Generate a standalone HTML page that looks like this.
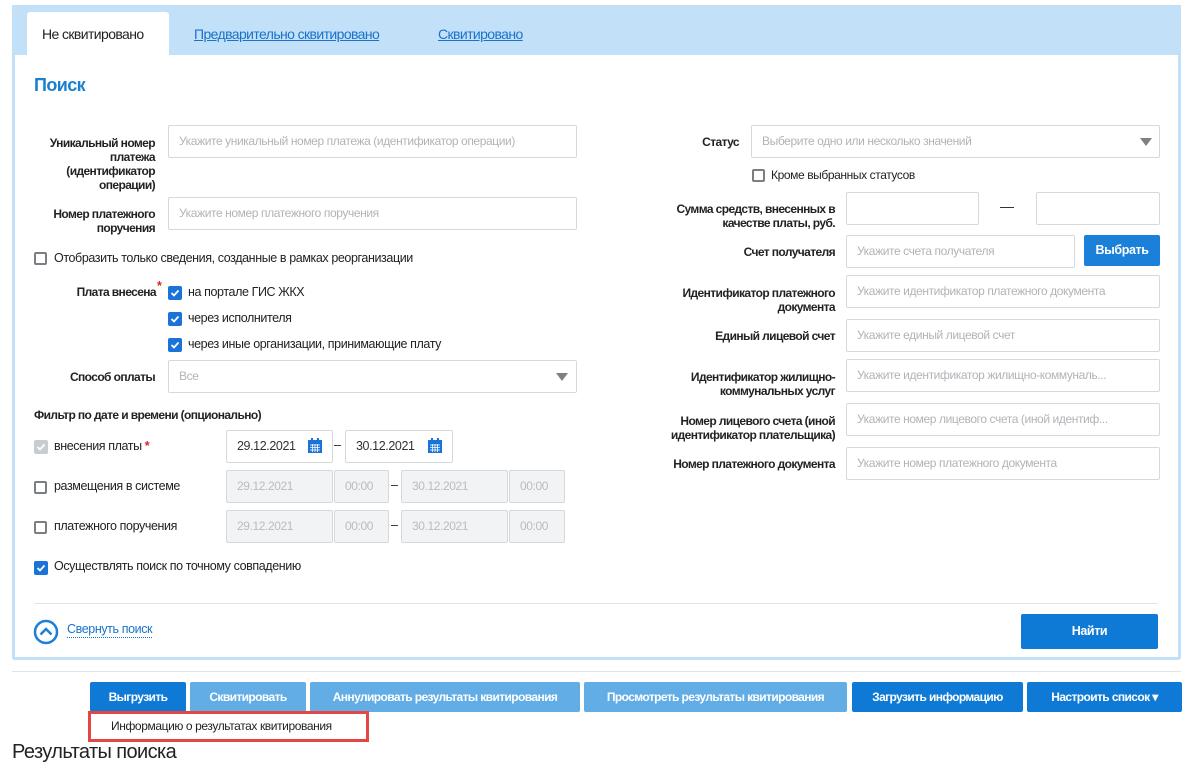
<!DOCTYPE html>
<html><head><meta charset="utf-8"><style>
*{box-sizing:border-box;margin:0;padding:0}
body{width:1193px;height:750px;overflow:hidden;background:#fff;position:relative;font-family:"Liberation Sans Narrow","Liberation Sans",sans-serif;font-size:12.5px;letter-spacing:-0.4px;color:#222}
.a{position:absolute}
.lb{position:absolute;font-weight:bold;text-align:right;line-height:14px;color:#222;font-size:12px;letter-spacing:-0.6px}
.in{position:absolute;border:1px solid #d6d9dc;border-radius:2px;background:#fff;height:33px;padding-left:10px;line-height:31px;font-size:12px;color:#b0b4b8;white-space:nowrap;overflow:hidden}
.dis{background:#f1f3f5;color:#b9bdc1}
.cb{position:absolute;width:13px;height:13px;border:2px solid #7b7f84;border-radius:2px;background:#fff}
.ck{position:absolute;width:14px;height:14px;border-radius:2px;background:#1a73d9}
.ck svg,.gk svg{position:absolute;left:2px;top:2px}
.gk{position:absolute;width:14px;height:14px;border-radius:2px;background:#c9cccf}
.t{position:absolute;white-space:nowrap;color:#222}
.btn{position:absolute;top:682px;height:30px;color:#fff;font-weight:bold;text-align:center;line-height:30px;font-size:12px;letter-spacing:-0.6px;border-radius:2px;white-space:nowrap;overflow:hidden}
.b1{background:#0f7ad6}.b2{background:#62ade5}
.tri{position:absolute;width:0;height:0;border-left:6px solid transparent;border-right:6px solid transparent;border-top:8px solid #7d8185}
</style></head><body>
<div class="a" style="left:12px;top:5px;width:1169px;height:50px;background:#c2e0f7"></div>
<div class="a" style="left:12px;top:55px;width:1169px;height:605px;border:3px solid #c2e0f7;border-top:none;border-radius:0 0 3px 3px"></div>
<div class="a" style="left:27px;top:12px;width:142px;height:43px;background:#fff;border-radius:3px 3px 0 0"></div>
<div class="t" style="left:42px;top:26px;font-size:14px;letter-spacing:-0.6px">Не сквитировано</div>
<div class="t" style="left:194px;top:26px;font-size:14px;letter-spacing:-0.6px;color:#1a73c9;text-decoration:underline">Предварительно сквитировано</div>
<div class="t" style="left:438px;top:26px;font-size:14px;letter-spacing:-0.6px;color:#1a73c9;text-decoration:underline">Сквитировано</div>
<div class="t" style="left:34px;top:75px;font-size:18px;font-weight:bold;color:#1a80cf;letter-spacing:-0.6px">Поиск</div>

<div class="lb" style="left:20px;top:136px;width:135px">Уникальный номер платежа (идентификатор операции)</div>
<div class="in" style="left:168px;top:125px;width:409px">Укажите уникальный номер платежа (идентификатор операции)</div>
<div class="lb" style="left:20px;top:207px;width:135px">Номер платежного поручения</div>
<div class="in" style="left:168px;top:197px;width:409px">Укажите номер платежного поручения</div>
<div class="cb" style="left:34px;top:252px"></div>
<div class="t" style="left:54px;top:251px">Отобразить только сведения, созданные в рамках реорганизации</div>
<div class="lb" style="left:20px;top:285px;width:136px">Плата внесена</div>
<div class="t" style="left:157px;top:279px;color:#d22;font-weight:bold">*</div>
<div class="ck" style="left:168px;top:286px"><svg width="10" height="10"><path d="M1.5 5l2.5 2.5 4.5-5" stroke="#fff" stroke-width="1.8" fill="none"/></svg></div>
<div class="t" style="left:188px;top:285px">на портале ГИС ЖКХ</div>
<div class="ck" style="left:168px;top:312px"><svg width="10" height="10"><path d="M1.5 5l2.5 2.5 4.5-5" stroke="#fff" stroke-width="1.8" fill="none"/></svg></div>
<div class="t" style="left:188px;top:311px">через исполнителя</div>
<div class="ck" style="left:168px;top:338px"><svg width="10" height="10"><path d="M1.5 5l2.5 2.5 4.5-5" stroke="#fff" stroke-width="1.8" fill="none"/></svg></div>
<div class="t" style="left:188px;top:337px">через иные организации, принимающие плату</div>
<div class="lb" style="left:20px;top:370px;width:135px">Способ оплаты</div>
<div class="in" style="left:168px;top:360px;width:409px">Все</div>
<div class="tri" style="left:556px;top:373px"></div>

<div class="t" style="left:34px;top:408px;font-weight:bold;font-size:12px;letter-spacing:-0.6px">Фильтр по дате и времени (опционально)</div>
<div class="gk" style="left:34px;top:440px"><svg width="10" height="10"><path d="M1.5 5l2.5 2.5 4.5-5" stroke="#fff" stroke-width="1.8" fill="none"/></svg></div>
<div class="t" style="left:54px;top:439px">внесения платы <span style="color:#d22;font-weight:bold">*</span></div>
<div class="in" style="left:226px;top:430px;width:107px;color:#333;font-size:12.5px">29.12.2021</div>
<div class="in" style="left:345px;top:430px;width:108px;color:#333;font-size:12.5px">30.12.2021</div>
<svg class="a" style="left:307px;top:438px" width="16" height="16"><rect x="1" y="2" width="14" height="13" fill="#1a73d9"/><rect x="4" y="0" width="2" height="4" fill="#1a73d9"/><rect x="10" y="0" width="2" height="4" fill="#1a73d9"/><path d="M3 7h10M3 9.5h10M3 12h10M5.5 6v8M8 6v8M10.5 6v8" stroke="#fff" stroke-width=".8"/></svg>
<svg class="a" style="left:427px;top:438px" width="16" height="16"><rect x="1" y="2" width="14" height="13" fill="#1a73d9"/><rect x="4" y="0" width="2" height="4" fill="#1a73d9"/><rect x="10" y="0" width="2" height="4" fill="#1a73d9"/><path d="M3 7h10M3 9.5h10M3 12h10M5.5 6v8M8 6v8M10.5 6v8" stroke="#fff" stroke-width=".8"/></svg>
<div class="t" style="left:334px;top:438px">–</div>

<div class="cb" style="left:34px;top:481px"></div>
<div class="t" style="left:54px;top:479px">размещения в системе</div>
<div class="in dis" style="left:226px;top:470px;width:107px">29.12.2021</div>
<div class="in dis" style="left:334px;top:470px;width:55px">00:00</div>
<div class="t" style="left:391px;top:478px">–</div>
<div class="in dis" style="left:401px;top:470px;width:107px">30.12.2021</div>
<div class="in dis" style="left:509px;top:470px;width:56px">00:00</div>
<div class="cb" style="left:34px;top:521px"></div>
<div class="t" style="left:54px;top:519px">платежного поручения</div>
<div class="in dis" style="left:226px;top:510px;width:107px">29.12.2021</div>
<div class="in dis" style="left:334px;top:510px;width:55px">00:00</div>
<div class="t" style="left:391px;top:518px">–</div>
<div class="in dis" style="left:401px;top:510px;width:107px">30.12.2021</div>
<div class="in dis" style="left:509px;top:510px;width:56px">00:00</div>
<div class="ck" style="left:34px;top:561px"><svg width="10" height="10"><path d="M1.5 5l2.5 2.5 4.5-5" stroke="#fff" stroke-width="1.8" fill="none"/></svg></div>
<div class="t" style="left:54px;top:559px">Осуществлять поиск по точному совпадению</div>

<div class="lb" style="left:640px;top:135px;width:99px">Статус</div>
<div class="in" style="left:751px;top:125px;width:409px">Выберите одно или несколько значений</div>
<div class="tri" style="left:1140px;top:138px"></div>
<div class="cb" style="left:752px;top:169px"></div>
<div class="t" style="left:771px;top:168px;font-size:12px">Кроме выбранных статусов</div>
<div class="lb" style="left:640px;top:202px;width:195px">Сумма средств, внесенных в качестве платы, руб.</div>
<div class="in" style="left:846px;top:192px;width:133px"></div>
<div class="a" style="left:1000px;top:207px;width:14px;height:1px;background:#333"></div>
<div class="in" style="left:1036px;top:192px;width:124px"></div>
<div class="lb" style="left:640px;top:245px;width:195px">Счет получателя</div>
<div class="in" style="left:846px;top:235px;width:229px">Укажите счета получателя</div>
<div class="a" style="left:1084px;top:235px;width:76px;height:31px;background:#1a80d9;color:#fff;font-weight:bold;text-align:center;line-height:31px;border-radius:2px;font-size:12.5px">Выбрать</div>
<div class="lb" style="left:640px;top:286px;width:195px">Идентификатор платежного документа</div>
<div class="in" style="left:846px;top:275px;width:314px">Укажите идентификатор платежного документа</div>
<div class="lb" style="left:640px;top:329px;width:195px">Единый лицевой счет</div>
<div class="in" style="left:846px;top:319px;width:314px">Укажите единый лицевой счет</div>
<div class="lb" style="left:640px;top:370px;width:195px">Идентификатор жилищно-коммунальных услуг</div>
<div class="in" style="left:846px;top:359px;width:314px">Укажите идентификатор жилищно-коммуналь...</div>
<div class="lb" style="left:640px;top:414px;width:195px">Номер лицевого счета (иной идентификатор плательщика)</div>
<div class="in" style="left:846px;top:403px;width:314px">Укажите номер лицевого счета (иной идентиф...</div>
<div class="lb" style="left:640px;top:457px;width:195px">Номер платежного документа</div>
<div class="in" style="left:846px;top:447px;width:314px">Укажите номер платежного документа</div>

<div class="a" style="left:34px;top:603px;width:1124px;height:1px;background:#e2e4e6"></div>
<svg class="a" style="left:33px;top:619px" width="26" height="26"><circle cx="13" cy="13" r="11" fill="none" stroke="#1a80d9" stroke-width="2.5"/><path d="M7.5 15.5l5.5-5.5 5.5 5.5" fill="none" stroke="#1a80d9" stroke-width="2.5"/></svg>
<div class="t" style="left:67px;top:622px;color:#1a73c9;border-bottom:1px dotted #1a73c9;line-height:15px">Свернуть поиск</div>
<div class="a" style="left:1021px;top:614px;width:137px;height:35px;background:#0f7ad6;color:#fff;font-weight:bold;text-align:center;line-height:35px;border-radius:2px">Найти</div>

<div class="a" style="left:12px;top:671px;width:1169px;height:1px;background:#e2e4e6"></div>
<div class="btn b1" style="left:90px;width:96px">Выгрузить</div>
<div class="btn b2" style="left:190px;width:116px">Сквитировать</div>
<div class="btn b2" style="left:310px;width:270px">Аннулировать результаты квитирования</div>
<div class="btn b2" style="left:584px;width:263px">Просмотреть результаты квитирования</div>
<div class="btn b1" style="left:852px;width:171px">Загрузить информацию</div>
<div class="btn b1" style="left:1027px;width:155px">Настроить список ▾</div>
<div class="t" style="left:12px;top:741px;font-size:20px;letter-spacing:-0.6px">Результаты поиска</div>
<div class="a" style="left:88px;top:711px;width:281px;height:31px;border:3px solid #e64545;background:#fff"></div>
<div class="t" style="left:111px;top:719px;font-size:12px">Информацию о результатах квитирования</div>
</body></html>
